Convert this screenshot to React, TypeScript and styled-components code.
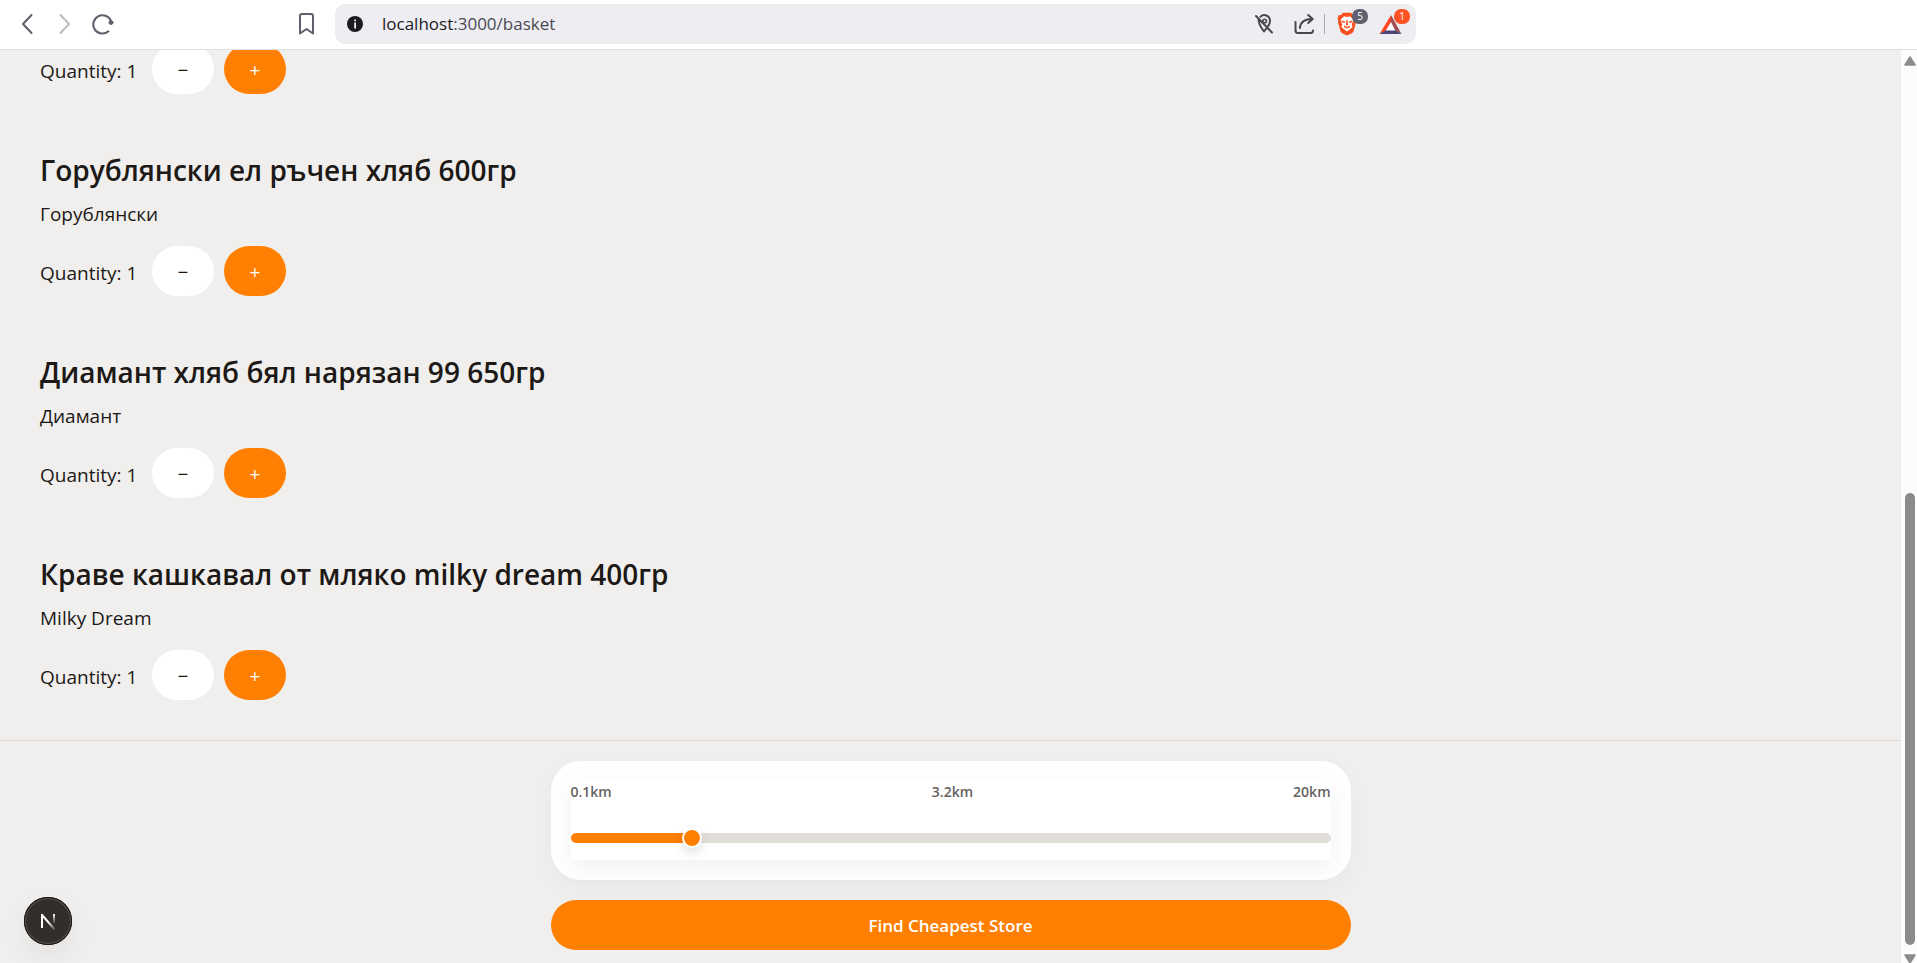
import React, { useState } from "react";
import styled, { createGlobalStyle } from "styled-components";

const GlobalStyle = createGlobalStyle`
  *, *::before, *::after { box-sizing: border-box; }
  body {
    margin: 0;
    background: #f0efed;
    color: #1c1917;
    font-family: "Segoe UI", "Open Sans", "Noto Sans", sans-serif;
    font-size: 19px;
  }
  button, input { font: inherit; }
`;

const Window = styled.div`
  display: flex;
  flex-direction: column;
  height: 100vh;
  overflow: hidden;
`;

const Toolbar = styled.header`
  flex: none;
  display: grid;
  grid-template-columns: 335fr 1081fr 501fr;
  align-items: center;
  height: 50px;
  padding-bottom: 1px;
  background: #fff;
  border-bottom: 1px solid #dfe1e5;
`;

const NavGroup = styled.nav`
  display: flex;
  padding: 0 9px 0 8px;
`;

const IconButton = styled.button<{ $push?: boolean; $width?: number }>`
  position: relative;
  display: flex;
  align-items: center;
  justify-content: center;
  width: ${(p) => p.$width ?? 38}px;
  height: 38px;
  margin-left: ${(p) => (p.$push ? "auto" : "0")};
  padding: 0;
  border: 0;
  background: none;
  color: #5f5e6b;

  &:disabled { color: #bcbcc1; }
  svg { display: block; flex: none; }
`;

const AddressBar = styled.div`
  display: flex;
  align-items: center;
  height: 40px;
  padding: 0 5px 0 12px;
  border-radius: 10px;
  background: #eeedf2;
`;

const Url = styled.span`
  flex: 1;
  margin-left: 19px;
  font-size: 17px;
  line-height: 24px;
  color: #4a4a52;

  b { font-weight: 400; color: #1b1b1f; }
`;

const Separator = styled.span`
  width: 1px;
  height: 20px;
  background: #a9a8b0;
`;

const Counter = styled.span<{ $color: string }>`
  position: absolute;
  top: 4px;
  right: 1px;
  width: 16px;
  height: 15px;
  border-radius: 7px;
  background: ${(p) => p.$color};
  color: #fff;
  font-size: 10px;
  line-height: 15px;
  text-align: center;
`;

const Viewport = styled.div`
  flex: 1;
  min-height: 0;
  display: flex;
`;

const Page = styled.main`
  flex: 1;
  min-width: 0;
  display: flex;
  flex-direction: column;
  justify-content: flex-end;
  overflow: hidden;
`;

const BasketList = styled.ul`
  flex: none;
  display: flex;
  flex-direction: column;
  gap: 56px;
  margin: 0;
  padding: 0 40px 40px;
  list-style: none;
`;

const ItemTitle = styled.h2`
  margin: 0 0 8px;
  font-size: 28px;
  font-weight: 600;
  line-height: 40px;
`;

const Brand = styled.p`
  margin: 0 0 16px;
  line-height: 32px;
`;

const QuantityRow = styled.div`
  display: flex;
  align-items: center;
  gap: 10px;
`;

const QuantityLabel = styled.span`
  width: 102px;
  padding-top: 4px;
  white-space: nowrap;
`;

const StepButton = styled.button<{ $primary?: boolean }>`
  width: 62px;
  height: 50px;
  padding: 2px 0 0;
  border: 0;
  border-radius: 25px;
  background: ${(p) => (p.$primary ? "#ff7f03" : "#fff")};
  color: ${(p) => (p.$primary ? "#fff" : "#1c1917")};
  font-size: 19px;
`;

const Footer = styled.footer`
  flex: none;
  display: flex;
  flex-direction: column;
  align-items: center;
  gap: 20px;
  padding: 20px 20px 13px;
  border-top: 1px solid #e0ddd9;
`;

const RangeCard = styled.section`
  width: 100%;
  max-width: 800px;
  padding: 20px;
  border-radius: 30px;
  background: #fff;
  box-shadow: 0 8px 24px rgba(0, 0, 0, 0.03);
`;

const RangePanel = styled.div`
  height: 79px;
  background: #fff;
  box-shadow: 0 8px 24px rgba(0, 0, 0, 0.06);
`;

const RangeLabels = styled.div`
  display: flex;
  justify-content: space-between;
  font-size: 14px;
  font-weight: 600;
  line-height: 22px;
  color: #66615d;
`;

const Track = styled.div`
  display: flex;
  align-items: center;
  height: 10px;
  margin-top: 30px;
  border-radius: 5px;
`;

const thumb = `
  width: 20px;
  height: 20px;
  border: 2px solid #fff;
  border-radius: 50%;
  background: #ff7f03;
  box-shadow: 0 5px 12px rgba(0, 0, 0, 0.12);
`;

const Range = styled.input`
  flex: 1;
  height: 20px;
  margin: 0 -10px;
  appearance: none;
  background: none;

  &::-webkit-slider-thumb { appearance: none; ${thumb} }
  &::-moz-range-thumb { box-sizing: border-box; ${thumb} }
`;

const SubmitButton = styled.button`
  width: 100%;
  max-width: 800px;
  height: 50px;
  border: 0;
  border-radius: 25px;
  background: #ff7f03;
  color: #fff;
  font-size: 17px;
  font-weight: 600;
`;

const Scrollbar = styled.div`
  flex: none;
  display: flex;
  flex-direction: column;
  align-items: center;
  width: 16px;
  padding: 6px 0 0 2px;
  background: #fcfcfc;

  svg { display: block; flex: none; }
`;

const ScrollTrack = styled.div`
  flex: 1;
  display: flex;
  flex-direction: column;
  justify-content: flex-end;
  padding: 9px 0 8px;
`;

const ScrollThumb = styled.div`
  width: 10px;
  height: 52%;
  border-radius: 5px;
  background: #8b8b8b;
`;

const DevBadge = styled.button`
  position: fixed;
  left: 24px;
  bottom: 18px;
  width: 48px;
  height: 48px;
  padding: 0;
  border: 0;
  border-radius: 50%;
  background: #332e2b;
  box-shadow: inset 0 0 0 1px #15120f, inset 0 0 0 2px #5a5653, 0 12px 28px rgba(0, 0, 0, 0.06);

  svg { display: block; margin: auto; }
`;

type Product = { title?: string; brand?: string };

const products: Product[] = [
  {},
  { title: "Горублянски ел ръчен хляб 600гр", brand: "Горублянски" },
  { title: "Диамант хляб бял нарязан 99 650гр", brand: "Диамант" },
  { title: "Краве кашкавал от мляко milky dream 400гр", brand: "Milky Dream" },
];

function BasketItem({ title, brand }: Product) {
  const [quantity, setQuantity] = useState(1);
  return (
    <li>
      {title && <ItemTitle>{title}</ItemTitle>}
      {brand && <Brand>{brand}</Brand>}
      <QuantityRow>
        <QuantityLabel>Quantity: {quantity}</QuantityLabel>
        <StepButton type="button" onClick={() => setQuantity(Math.max(1, quantity - 1))}>−</StepButton>
        <StepButton type="button" $primary onClick={() => setQuantity(quantity + 1)}>+</StepButton>
      </QuantityRow>
    </li>
  );
}

function DistanceRange() {
  const [distance, setDistance] = useState(3.2);
  const filled = (distance / 20) * 100;
  return (
    <RangeCard>
      <RangePanel>
        <RangeLabels>
          <span>0.1km</span>
          <label htmlFor="distance">{distance}km</label>
          <span>20km</span>
        </RangeLabels>
        <Track style={{ background: `linear-gradient(to right, #ff7f03 ${filled}%, #e1ddd9 ${filled}%)` }}>
          <Range
            id="distance"
            type="range"
            min={0}
            max={20}
            step={0.1}
            value={distance}
            onChange={(e) => setDistance(Math.max(0.1, Number(e.target.value)))}
          />
        </Track>
      </RangePanel>
    </RangeCard>
  );
}

const line = { fill: "none", stroke: "currentColor", strokeWidth: 2, strokeLinecap: "round", strokeLinejoin: "round" } as const;

function BrowserToolbar() {
  return (
    <Toolbar>
      <NavGroup>
        <IconButton type="button" aria-label="Back">
          <svg width="22" height="22" viewBox="0 0 22 22" {...line}><path d="M15.5 2 7 11l8.500 9" /></svg>
        </IconButton>
        <IconButton type="button" aria-label="Forward" disabled>
          <svg width="22" height="22" viewBox="0 0 22 22" {...line}><path d="m6.500 2 8.500 9-8.500 9" /></svg>
        </IconButton>
        <IconButton type="button" aria-label="Reload">
          <svg width="24" height="24" viewBox="0 0 24 24" {...line}>
            <path d="M17.500 19.300A9.200 9.200 0 1 1 20 9" />
            <circle cx="20" cy="10.500" r="2" fill="currentColor" strokeWidth="1" />
          </svg>
        </IconButton>
        <IconButton type="button" aria-label="Bookmark" $push>
          <svg width="20" height="24" viewBox="0 0 20 24" {...line}>
            <path d="M3 4a2 2 0 0 1 2-2h9a2 2 0 0 1 2 2v17.500l-6.500-4.500-6.500 4.500z" />
          </svg>
        </IconButton>
      </NavGroup>
      <AddressBar>
        <svg width="16" height="16" viewBox="0 0 16 16">
          <circle cx="8" cy="8" r="8" fill="#1b1b1d" />
          <path d="M7.200 3.500h1.800v1.700H7.200zM7.200 6.500h1.800v6H7.200z" fill="#eeedf2" />
        </svg>
        <Url><b>localhost</b>:3000/basket</Url>
        <IconButton type="button" aria-label="Location blocked" $width={40}>
          <svg width="20" height="22" viewBox="0 0 20 22" {...line} stroke="#48484c">
            <path d="M5.500 3.800C8.500.6 15 2.200 15 8.100c0 1.900-.8 3.600-1.900 5.100M3.700 6.200c-.7 4.600 2.700 8.600 5.300 12.300l2-2.600M1 3l16 16.500" />
            <circle cx="9.600" cy="8" r="1.800" strokeWidth="1.600" />
          </svg>
        </IconButton>
        <IconButton type="button" aria-label="Share" $width={39}>
          <svg width="21" height="22" viewBox="0 0 21 22" {...line} stroke="#48484c">
            <path d="M1.500 9v8.500A2.500 2.500 0 0 0 4 20h12.500a2.500 2.500 0 0 0 2.500-2.500M6 15c.3-5.500 4-9 12.500-9M14.200 2l4.500 4-4.500 4" />
          </svg>
        </IconButton>
        <Separator />
        <IconButton type="button" aria-label="Brave Shields" $width={44}>
          <svg width="20" height="24" viewBox="0 0 20 24">
            <path d="M6 .8h8l2.200 2.400 2-.2 1.300 3.500-.8 2.200.3 1.500-2.500 9.300-1.500 1.800L10 23.500l-5-2.200-1.500-1.800L1 10.200l.3-1.500L.5 6.500 1.800 3l2 .2z" fill="#fb4f1e" />
            <path d="M7 4.200 10 5l3-.8 3.500 3.600-1.700 4.700.8 2.600-2.600 2.100L10 19.600l-3-2.400-2.600-2.100.8-2.600-1.700-4.700z" fill="#fff" />
            <path d="m4.600 8.600 3.600 1-.6 1.400-2.600-.8zM15.400 8.600l-3.600 1 .6 1.400 2.600-.8zM9.400 8h1.200l.4 5-1 .8-1-.8zM6.500 13.200l3.500 1.900 3.500-1.900-1 2.200-2.500 1-2.500-1z" fill="#fb4f1e" />
          </svg>
          <Counter $color="#62616f">5</Counter>
        </IconButton>
        <IconButton type="button" aria-label="Brave Rewards" $width={42}>
          <svg width="24" height="22" viewBox="0 0 24 22">
            <path d="M13 2 2 20.500h21z" fill="#fff" />
            <path d="M13 2 1.500 21 7.500 18 13 9z" fill="#ff4724" />
            <path d="M13 2v7l4.500 9 6 3z" fill="#9e4f56" />
            <path d="M1.500 21 7.500 17.500h10l6 3.500z" fill="#494878" />
          </svg>
          <Counter $color="#ff5323">1</Counter>
        </IconButton>
      </AddressBar>
    </Toolbar>
  );
}

export default function App() {
  return (
    <Window>
      <GlobalStyle />
      <BrowserToolbar />
      <Viewport>
        <Page>
          <BasketList>
            {products.map((product, index) => (
              <BasketItem key={index} {...product} />
            ))}
          </BasketList>
          <Footer>
            <DistanceRange />
            <SubmitButton type="button">Find Cheapest Store</SubmitButton>
          </Footer>
        </Page>
        <Scrollbar aria-hidden="true">
          <svg width="12" height="10" viewBox="0 0 12 10">
            <path d="M6 1 11 9H1z" fill="#8b8b8b" stroke="#8b8b8b" strokeWidth="1.500" strokeLinejoin="round" />
          </svg>
          <ScrollTrack>
            <ScrollThumb />
          </ScrollTrack>
          <svg width="12" height="10" viewBox="0 0 12 10">
            <path d="M1 2h10L6 10z" fill="#8b8b8b" stroke="#8b8b8b" strokeWidth="1.500" strokeLinejoin="round" />
          </svg>
        </Scrollbar>
      </Viewport>
      <DevBadge type="button" aria-label="Open Next.js dev tools">
        <svg width="18" height="18" viewBox="0 0 18 18" fill="none" strokeWidth="2">
          <defs>
            <linearGradient id="diagonal" x1="10" y1="10" x2="16" y2="18" gradientUnits="userSpaceOnUse">
              <stop stopColor="#fff" />
              <stop offset="1" stopColor="#fff" stopOpacity="0.1" />
            </linearGradient>
            <linearGradient id="stem" x1="14" y1="2" x2="14" y2="11" gradientUnits="userSpaceOnUse">
              <stop stopColor="#fff" />
              <stop offset="1" stopColor="#fff" stopOpacity="0.1" />
            </linearGradient>
          </defs>
          <path d="M3 16V2" stroke="#fff" />
          <path d="m2.600 2.500 13 15" stroke="url(#diagonal)" />
          <path d="M15 2v9" stroke="url(#stem)" />
        </svg>
      </DevBadge>
    </Window>
  );
}
